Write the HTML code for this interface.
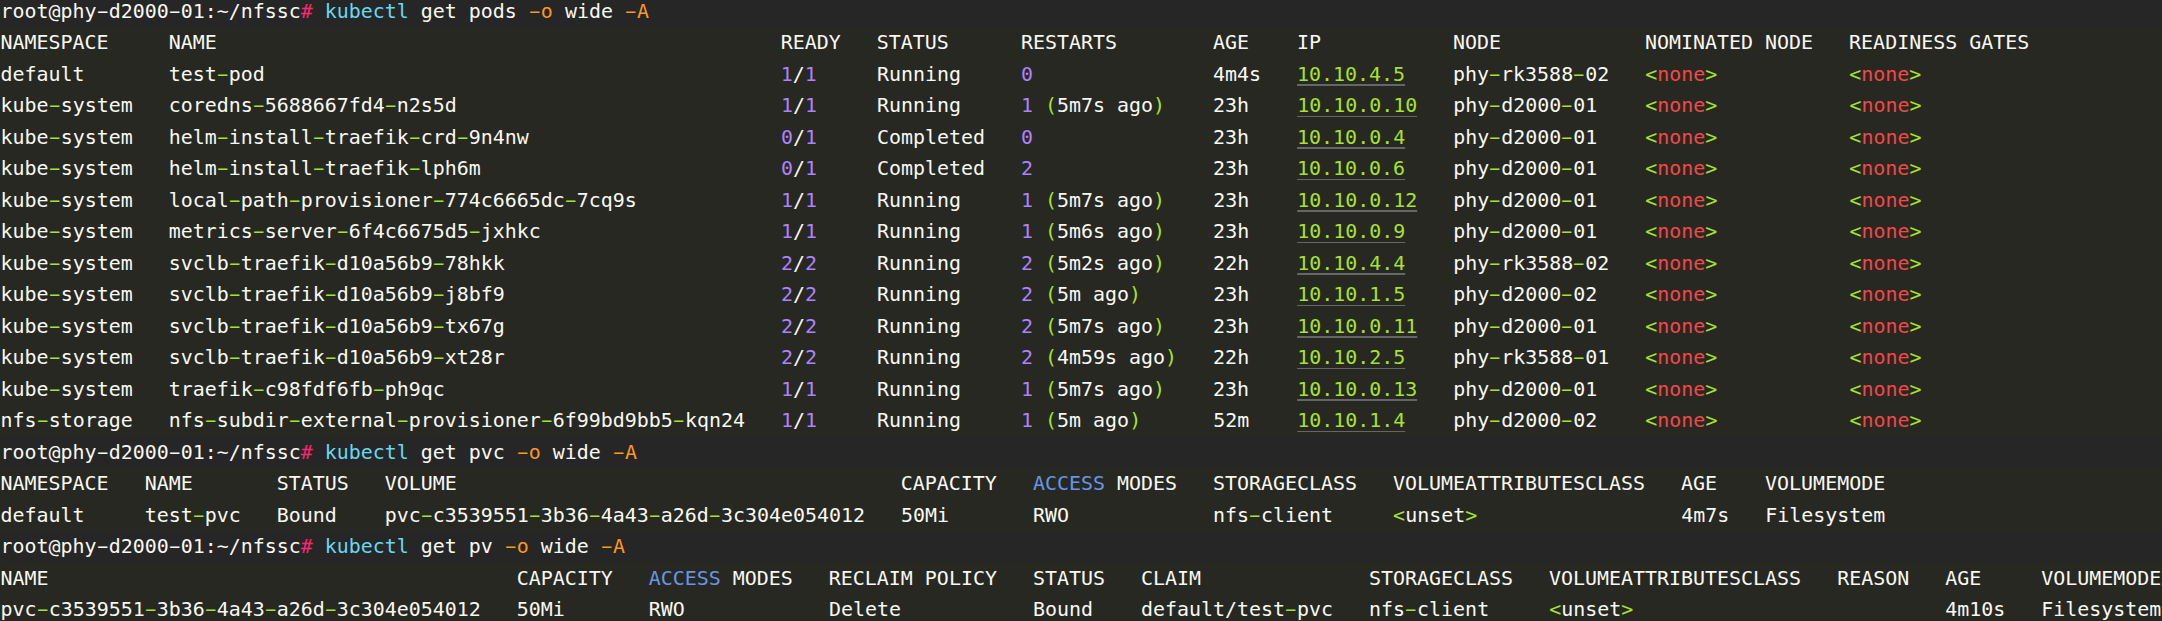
<!DOCTYPE html>
<html lang="en">
<head>
<meta charset="utf-8">
<title>kubectl get pods</title>
<style>
html,body{margin:0;padding:0;background:#272822;}
body{width:2162px;height:621px;overflow:hidden;}
#term{position:absolute;left:0.6px;top:-4.4px;width:2162px;font-family:"DejaVu Sans Mono","Liberation Mono",monospace;font-size:19.943px;line-height:31.5px;color:#f8f8f2;font-variant-ligatures:none;letter-spacing:0px;}
.l{height:31.5px;white-space:pre;margin-left:-0.6px;padding-left:0.6px;}
.bd{position:absolute;left:1px;width:2161px;background:#262626;}
.h{display:inline-block;transform:translateX(-0.3px) scaleX(1.83);}
.k{color:#f92672}
.c{color:#66d9ef}
.f{color:#fd971f}
.n{color:#ae81ff}
.g{color:#a6e22e}
.r{color:#f44747}
.b{color:#6796e6}
.ip{color:#a6e22e;text-decoration:underline;text-decoration-color:#666;text-decoration-thickness:2px;text-underline-offset:3px;}
.o .ip{text-decoration-thickness:1px;text-underline-offset:4px;}
</style>
</head>
<body>
<div class="bd" style="top:0px;height:27px"></div>
<div class="bd" style="top:436px;height:32px"></div>
<div class="bd" style="top:531px;height:31px"></div>
<div id="term">
<div class="l p">root@phy<span class="h">-</span>d2000<span class="h">-</span>01:~/nfssc<span class="k">#</span> <span class="c">kubectl</span> get pods <span class="f"><span class="h">-</span>o</span> wide <span class="f"><span class="h">-</span>A</span></div>
<div class="l o">NAMESPACE     NAME                                               READY   STATUS      RESTARTS        AGE    IP           NODE            NOMINATED NODE   READINESS GATES</div>
<div class="l">default       test<span class="g h">-</span>pod                                           <span class="n">1</span>/<span class="n">1</span>     Running     <span class="n">0</span>               4m4s   <span class="ip">10.10.4.5</span>    phy<span class="g h">-</span>rk3588<span class="g h">-</span>02   <span class="g">&lt;</span><span class="r">none</span><span class="g">&gt;</span>           <span class="g">&lt;</span><span class="r">none</span><span class="g">&gt;</span></div>
<div class="l o">kube<span class="g h">-</span>system   coredns<span class="g h">-</span>5688667fd4<span class="g h">-</span>n2s5d                           <span class="n">1</span>/<span class="n">1</span>     Running     <span class="n">1</span> <span class="g">(</span>5m7s ago<span class="g">)</span>    23h    <span class="ip">10.10.0.10</span>   phy<span class="g h">-</span>d2000<span class="g h">-</span>01    <span class="g">&lt;</span><span class="r">none</span><span class="g">&gt;</span>           <span class="g">&lt;</span><span class="r">none</span><span class="g">&gt;</span></div>
<div class="l">kube<span class="g h">-</span>system   helm<span class="g h">-</span>install<span class="g h">-</span>traefik<span class="g h">-</span>crd<span class="g h">-</span>9n4nw                     <span class="n">0</span>/<span class="n">1</span>     Completed   <span class="n">0</span>               23h    <span class="ip">10.10.0.4</span>    phy<span class="g h">-</span>d2000<span class="g h">-</span>01    <span class="g">&lt;</span><span class="r">none</span><span class="g">&gt;</span>           <span class="g">&lt;</span><span class="r">none</span><span class="g">&gt;</span></div>
<div class="l o">kube<span class="g h">-</span>system   helm<span class="g h">-</span>install<span class="g h">-</span>traefik<span class="g h">-</span>lph6m                         <span class="n">0</span>/<span class="n">1</span>     Completed   <span class="n">2</span>               23h    <span class="ip">10.10.0.6</span>    phy<span class="g h">-</span>d2000<span class="g h">-</span>01    <span class="g">&lt;</span><span class="r">none</span><span class="g">&gt;</span>           <span class="g">&lt;</span><span class="r">none</span><span class="g">&gt;</span></div>
<div class="l">kube<span class="g h">-</span>system   local<span class="g h">-</span>path<span class="g h">-</span>provisioner<span class="g h">-</span>774c6665dc<span class="g h">-</span>7cq9s            <span class="n">1</span>/<span class="n">1</span>     Running     <span class="n">1</span> <span class="g">(</span>5m7s ago<span class="g">)</span>    23h    <span class="ip">10.10.0.12</span>   phy<span class="g h">-</span>d2000<span class="g h">-</span>01    <span class="g">&lt;</span><span class="r">none</span><span class="g">&gt;</span>           <span class="g">&lt;</span><span class="r">none</span><span class="g">&gt;</span></div>
<div class="l o">kube<span class="g h">-</span>system   metrics<span class="g h">-</span>server<span class="g h">-</span>6f4c6675d5<span class="g h">-</span>jxhkc                    <span class="n">1</span>/<span class="n">1</span>     Running     <span class="n">1</span> <span class="g">(</span>5m6s ago<span class="g">)</span>    23h    <span class="ip">10.10.0.9</span>    phy<span class="g h">-</span>d2000<span class="g h">-</span>01    <span class="g">&lt;</span><span class="r">none</span><span class="g">&gt;</span>           <span class="g">&lt;</span><span class="r">none</span><span class="g">&gt;</span></div>
<div class="l">kube<span class="g h">-</span>system   svclb<span class="g h">-</span>traefik<span class="g h">-</span>d10a56b9<span class="g h">-</span>78hkk                       <span class="n">2</span>/<span class="n">2</span>     Running     <span class="n">2</span> <span class="g">(</span>5m2s ago<span class="g">)</span>    22h    <span class="ip">10.10.4.4</span>    phy<span class="g h">-</span>rk3588<span class="g h">-</span>02   <span class="g">&lt;</span><span class="r">none</span><span class="g">&gt;</span>           <span class="g">&lt;</span><span class="r">none</span><span class="g">&gt;</span></div>
<div class="l o">kube<span class="g h">-</span>system   svclb<span class="g h">-</span>traefik<span class="g h">-</span>d10a56b9<span class="g h">-</span>j8bf9                       <span class="n">2</span>/<span class="n">2</span>     Running     <span class="n">2</span> <span class="g">(</span>5m ago<span class="g">)</span>      23h    <span class="ip">10.10.1.5</span>    phy<span class="g h">-</span>d2000<span class="g h">-</span>02    <span class="g">&lt;</span><span class="r">none</span><span class="g">&gt;</span>           <span class="g">&lt;</span><span class="r">none</span><span class="g">&gt;</span></div>
<div class="l">kube<span class="g h">-</span>system   svclb<span class="g h">-</span>traefik<span class="g h">-</span>d10a56b9<span class="g h">-</span>tx67g                       <span class="n">2</span>/<span class="n">2</span>     Running     <span class="n">2</span> <span class="g">(</span>5m7s ago<span class="g">)</span>    23h    <span class="ip">10.10.0.11</span>   phy<span class="g h">-</span>d2000<span class="g h">-</span>01    <span class="g">&lt;</span><span class="r">none</span><span class="g">&gt;</span>           <span class="g">&lt;</span><span class="r">none</span><span class="g">&gt;</span></div>
<div class="l o">kube<span class="g h">-</span>system   svclb<span class="g h">-</span>traefik<span class="g h">-</span>d10a56b9<span class="g h">-</span>xt28r                       <span class="n">2</span>/<span class="n">2</span>     Running     <span class="n">2</span> <span class="g">(</span>4m59s ago<span class="g">)</span>   22h    <span class="ip">10.10.2.5</span>    phy<span class="g h">-</span>rk3588<span class="g h">-</span>01   <span class="g">&lt;</span><span class="r">none</span><span class="g">&gt;</span>           <span class="g">&lt;</span><span class="r">none</span><span class="g">&gt;</span></div>
<div class="l">kube<span class="g h">-</span>system   traefik<span class="g h">-</span>c98fdf6fb<span class="g h">-</span>ph9qc                            <span class="n">1</span>/<span class="n">1</span>     Running     <span class="n">1</span> <span class="g">(</span>5m7s ago<span class="g">)</span>    23h    <span class="ip">10.10.0.13</span>   phy<span class="g h">-</span>d2000<span class="g h">-</span>01    <span class="g">&lt;</span><span class="r">none</span><span class="g">&gt;</span>           <span class="g">&lt;</span><span class="r">none</span><span class="g">&gt;</span></div>
<div class="l o">nfs<span class="g h">-</span>storage   nfs<span class="g h">-</span>subdir<span class="g h">-</span>external<span class="g h">-</span>provisioner<span class="g h">-</span>6f99bd9bb5<span class="g h">-</span>kqn24   <span class="n">1</span>/<span class="n">1</span>     Running     <span class="n">1</span> <span class="g">(</span>5m ago<span class="g">)</span>      52m    <span class="ip">10.10.1.4</span>    phy<span class="g h">-</span>d2000<span class="g h">-</span>02    <span class="g">&lt;</span><span class="r">none</span><span class="g">&gt;</span>           <span class="g">&lt;</span><span class="r">none</span><span class="g">&gt;</span></div>
<div class="l p">root@phy<span class="h">-</span>d2000<span class="h">-</span>01:~/nfssc<span class="k">#</span> <span class="c">kubectl</span> get pvc <span class="f"><span class="h">-</span>o</span> wide <span class="f"><span class="h">-</span>A</span></div>
<div class="l o">NAMESPACE   NAME       STATUS   VOLUME                                     CAPACITY   <span class="b">ACCESS</span> MODES   STORAGECLASS   VOLUMEATTRIBUTESCLASS   AGE    VOLUMEMODE</div>
<div class="l">default     test<span class="g h">-</span>pvc   Bound    pvc<span class="g h">-</span>c3539551<span class="g h">-</span>3b36<span class="g h">-</span>4a43<span class="g h">-</span>a26d<span class="g h">-</span>3c304e054012   50Mi       RWO            nfs<span class="g h">-</span>client     <span class="g">&lt;</span>unset<span class="g">&gt;</span>                 4m7s   Filesystem</div>
<div class="l p">root@phy<span class="h">-</span>d2000<span class="h">-</span>01:~/nfssc<span class="k">#</span> <span class="c">kubectl</span> get pv <span class="f"><span class="h">-</span>o</span> wide <span class="f"><span class="h">-</span>A</span></div>
<div class="l">NAME                                       CAPACITY   <span class="b">ACCESS</span> MODES   RECLAIM POLICY   STATUS   CLAIM              STORAGECLASS   VOLUMEATTRIBUTESCLASS   REASON   AGE     VOLUMEMODE</div>
<div class="l o">pvc<span class="g h">-</span>c3539551<span class="g h">-</span>3b36<span class="g h">-</span>4a43<span class="g h">-</span>a26d<span class="g h">-</span>3c304e054012   50Mi       RWO            Delete           Bound    default/test<span class="g h">-</span>pvc   nfs<span class="g h">-</span>client     <span class="g">&lt;</span>unset<span class="g">&gt;</span>                          4m10s   Filesystem</div>
</div>
</body>
</html>
